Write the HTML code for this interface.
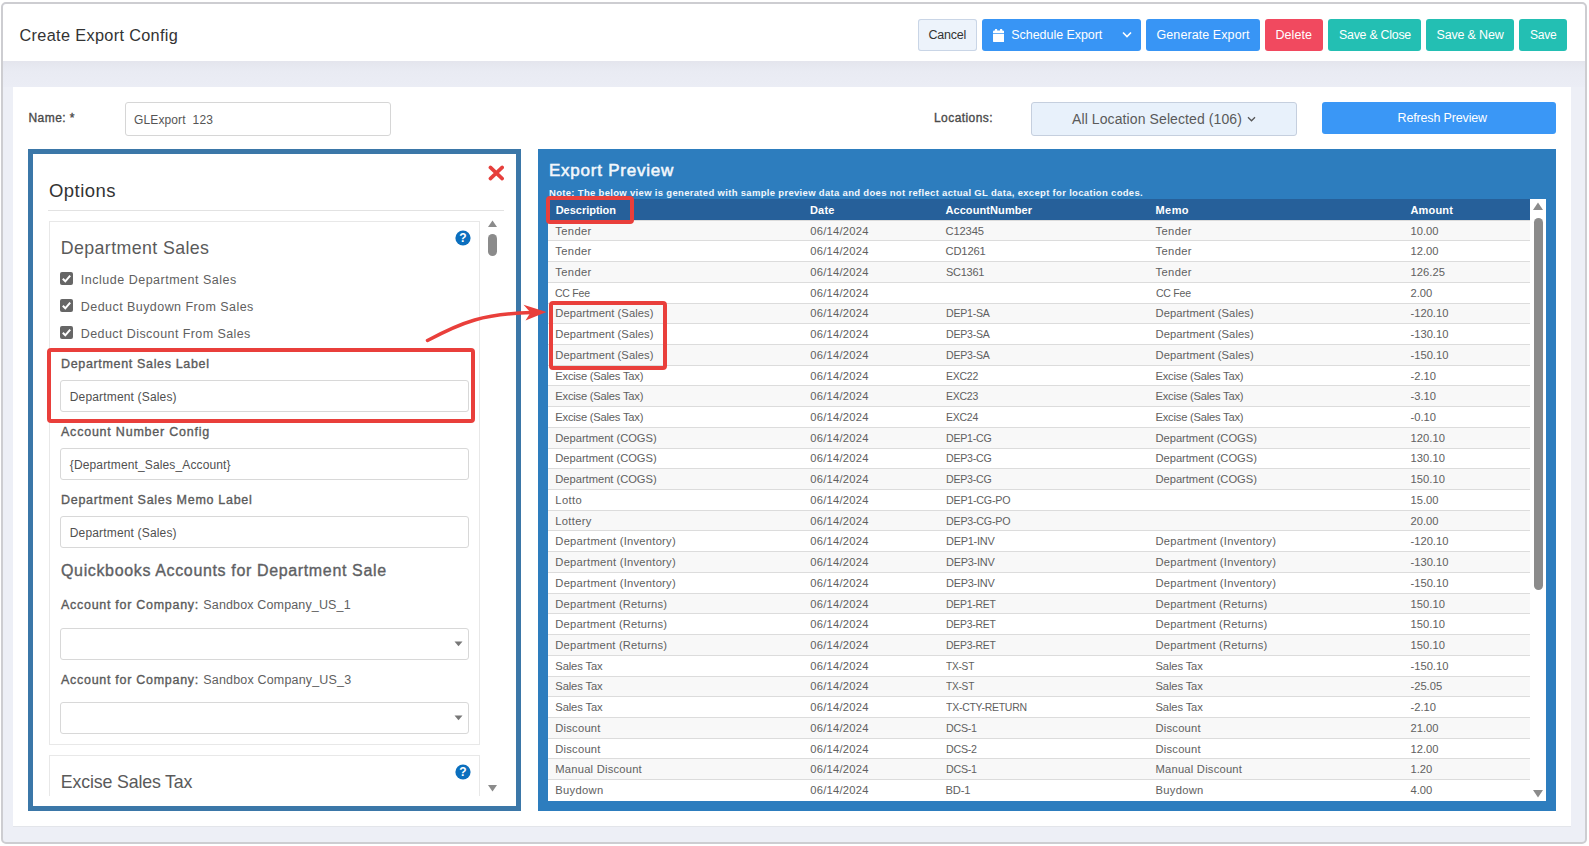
<!DOCTYPE html><html><head><meta charset="utf-8"><title>Create Export Config</title><style>
html,body{margin:0;padding:0;background:#fff;}body{width:1589px;height:846px;overflow:hidden;position:relative;font-family:"Liberation Sans", sans-serif;}
body>div,body>svg,body>span{position:absolute;display:block;}span{white-space:pre;}
</style></head><body>
<div style="left:1px;top:2px;width:1582px;height:838px;border:2px solid #cdcdd1;border-radius:5px;background:#edeff6;"></div>
<div style="left:3px;top:4px;width:1582px;height:57px;background:#fff;border-radius:4px 4px 0 0;"></div>
<div style="left:3px;top:61px;width:1582px;height:26px;background:linear-gradient(#e4e5ed,#e9ebf3 40%,#ebedf5);"></div>
<div style="left:13px;top:87px;width:1558px;height:739.3px;background:#fff;box-shadow:0 1px 0 #e3e5ea;"></div>
<div style="left:918px;top:19.3px;width:59px;height:31.5px;background:#edf3fb;border-radius:3px;box-shadow:inset 0 0 0 1px #c9d5e6;"></div>
<div style="left:982px;top:19.3px;width:159px;height:31.5px;background:#3895f5;border-radius:3px;"></div>
<div style="left:1146px;top:19.3px;width:114px;height:31.5px;background:#3895f5;border-radius:3px;"></div>
<div style="left:1265.3px;top:19.3px;width:57.7px;height:31.5px;background:#f1495f;border-radius:3px;"></div>
<div style="left:1328.3px;top:19.3px;width:92.7px;height:31.5px;background:#23bfb3;border-radius:3px;"></div>
<div style="left:1426.2px;top:19.3px;width:87.8px;height:31.5px;background:#23bfb3;border-radius:3px;"></div>
<div style="left:1519.2px;top:19.3px;width:47.8px;height:31.5px;background:#23bfb3;border-radius:3px;"></div>
<svg style="left:992.8px;top:29.1px" width="11.2" height="13.2" viewBox="0 0 11 13"><path fill="#fff" d="M0 4.7h11v7.1q0 1.2-1.2 1.2H1.2Q0 13 0 11.800zM0 3.9V2.800q0-1.200 1.200-1.200h0.700V0.500q0-.5.500-.5h1.200q.5 0 .5.500V1.600h2.800V0.500q0-.5.500-.5h1.200q.5 0 .5.500V1.600h0.700q1.200 0 1.200 1.200v1.100z"/></svg>
<svg style="left:1122px;top:31px" width="10" height="8" viewBox="0 0 10 8"><path fill="none" stroke="#fff" stroke-width="1.6" d="M1 1.5L5 5.5L9 1.5"/></svg>
<div style="left:125px;top:102px;width:265.5px;height:34px;background:#fff;border:1px solid #d6d6d6;border-radius:3px;box-sizing:border-box;"></div>
<div style="left:1031px;top:102px;width:265.5px;height:34px;background:#e8f1fb;border:1px solid #c5cfde;border-radius:3px;box-sizing:border-box;"></div>
<svg style="left:1246.5px;top:115.5px" width="9" height="7" viewBox="0 0 9 7"><path fill="none" stroke="#555" stroke-width="1.3" d="M1 1.2L4.5 4.8L8 1.2"/></svg>
<div style="left:1321.8px;top:102px;width:234.4px;height:31.6px;background:#3a97f6;border-radius:3px;"></div>
<div style="left:28px;top:149px;width:493px;height:662px;border:5px solid #3b77a8;box-sizing:border-box;background:#fff;"></div>
<svg style="left:488px;top:165px" width="16" height="16" viewBox="0 0 16 16"><path fill="none" stroke="#e63f3c" stroke-width="3.6" stroke-linecap="round" d="M2.4 2.4L14.2 13.6M14.2 2.4L2.4 13.6"/></svg>
<div style="left:48px;top:210px;width:456px;height:1px;background:#e2e2e2;"></div>
<div style="left:49px;top:221px;width:430.5px;height:524px;border:1px solid #e8e8e8;box-sizing:border-box;background:#fff;"></div>
<div style="left:49px;top:755px;width:430.5px;height:41px;border:1px solid #e8e8e8;border-bottom:none;box-sizing:border-box;background:#fff;"></div>
<svg style="left:454.6px;top:229.8px" width="16" height="16" viewBox="0 0 16 16"><circle cx="8" cy="8" r="7.6" fill="#0b6fbe"/><text x="8" y="12.3" text-anchor="middle" font-family='Liberation Sans' font-weight="700" font-size="12" fill="#fff">?</text></svg>
<svg style="left:454.6px;top:763.8px" width="16" height="16" viewBox="0 0 16 16"><circle cx="8" cy="8" r="7.6" fill="#0b6fbe"/><text x="8" y="12.3" text-anchor="middle" font-family='Liberation Sans' font-weight="700" font-size="12" fill="#fff">?</text></svg>
<svg style="left:486px;top:219px" width="13" height="10" viewBox="0 0 13 10"><path fill="#8b8b8b" d="M6.5 1.5L11 8H2z"/></svg>
<div style="left:488px;top:234.4px;width:9px;height:21.3px;background:#8b8b8b;border-radius:4.5px;"></div>
<svg style="left:486px;top:783px" width="13" height="10" viewBox="0 0 13 10"><path fill="#8b8b8b" d="M2 2h9L6.5 8.5z"/></svg>
<svg style="left:60.3px;top:272px" width="13" height="13" viewBox="0 0 13 13"><rect x="0" y="0" width="13" height="13" rx="2" fill="#666"/><path fill="none" stroke="#fff" stroke-width="2" d="M2.8 6.8L5.3 9.3L10.2 3.6"/></svg>
<svg style="left:60.3px;top:299px" width="13" height="13" viewBox="0 0 13 13"><rect x="0" y="0" width="13" height="13" rx="2" fill="#666"/><path fill="none" stroke="#fff" stroke-width="2" d="M2.8 6.8L5.3 9.3L10.2 3.6"/></svg>
<svg style="left:60.3px;top:326px" width="13" height="13" viewBox="0 0 13 13"><rect x="0" y="0" width="13" height="13" rx="2" fill="#666"/><path fill="none" stroke="#fff" stroke-width="2" d="M2.8 6.8L5.3 9.3L10.2 3.6"/></svg>
<div style="left:60.3px;top:380px;width:408.6px;height:32px;background:#fff;border:1px solid #d8d8d8;border-radius:3px;box-sizing:border-box;"></div>
<div style="left:60.3px;top:448px;width:408.6px;height:32px;background:#fff;border:1px solid #d8d8d8;border-radius:3px;box-sizing:border-box;"></div>
<div style="left:60.3px;top:516px;width:408.6px;height:32px;background:#fff;border:1px solid #d8d8d8;border-radius:3px;box-sizing:border-box;"></div>
<div style="left:60.3px;top:628px;width:408.6px;height:32px;background:#fff;border:1px solid #d8d8d8;border-radius:3px;box-sizing:border-box;"></div>
<svg style="left:453.5px;top:640.5px" width="9" height="6" viewBox="0 0 9 6"><path fill="#777" d="M0.5 0.5h8L4.5 5.2z"/></svg>
<div style="left:60.3px;top:702px;width:408.6px;height:32px;background:#fff;border:1px solid #d8d8d8;border-radius:3px;box-sizing:border-box;"></div>
<svg style="left:453.5px;top:714.5px" width="9" height="6" viewBox="0 0 9 6"><path fill="#777" d="M0.5 0.5h8L4.5 5.2z"/></svg>
<div style="left:538px;top:149px;width:1018px;height:662px;background:#2d7dbe;"></div>
<div style="left:548px;top:199px;width:998px;height:601.5px;background:#fff;"></div>
<div style="left:548px;top:199px;width:982px;height:20.68px;background:#26609a;"></div>
<div style="left:548px;top:219.68px;width:982px;height:20.72px;background:#f8f8f8;box-shadow:inset 0 1px 0 #dcdcdc;"></div>
<div style="left:548px;top:240.4px;width:982px;height:20.72px;background:#fff;box-shadow:inset 0 1px 0 #dcdcdc;"></div>
<div style="left:548px;top:261.12px;width:982px;height:20.72px;background:#f8f8f8;box-shadow:inset 0 1px 0 #dcdcdc;"></div>
<div style="left:548px;top:281.84px;width:982px;height:20.72px;background:#fff;box-shadow:inset 0 1px 0 #dcdcdc;"></div>
<div style="left:548px;top:302.56px;width:982px;height:20.72px;background:#f8f8f8;box-shadow:inset 0 1px 0 #dcdcdc;"></div>
<div style="left:548px;top:323.28px;width:982px;height:20.72px;background:#fff;box-shadow:inset 0 1px 0 #dcdcdc;"></div>
<div style="left:548px;top:344px;width:982px;height:20.72px;background:#f8f8f8;box-shadow:inset 0 1px 0 #dcdcdc;"></div>
<div style="left:548px;top:364.72px;width:982px;height:20.72px;background:#fff;box-shadow:inset 0 1px 0 #dcdcdc;"></div>
<div style="left:548px;top:385.44px;width:982px;height:20.72px;background:#f8f8f8;box-shadow:inset 0 1px 0 #dcdcdc;"></div>
<div style="left:548px;top:406.16px;width:982px;height:20.72px;background:#fff;box-shadow:inset 0 1px 0 #dcdcdc;"></div>
<div style="left:548px;top:426.88px;width:982px;height:20.72px;background:#f8f8f8;box-shadow:inset 0 1px 0 #dcdcdc;"></div>
<div style="left:548px;top:447.6px;width:982px;height:20.72px;background:#fff;box-shadow:inset 0 1px 0 #dcdcdc;"></div>
<div style="left:548px;top:468.32px;width:982px;height:20.72px;background:#f8f8f8;box-shadow:inset 0 1px 0 #dcdcdc;"></div>
<div style="left:548px;top:489.04px;width:982px;height:20.72px;background:#fff;box-shadow:inset 0 1px 0 #dcdcdc;"></div>
<div style="left:548px;top:509.76px;width:982px;height:20.72px;background:#f8f8f8;box-shadow:inset 0 1px 0 #dcdcdc;"></div>
<div style="left:548px;top:530.48px;width:982px;height:20.72px;background:#fff;box-shadow:inset 0 1px 0 #dcdcdc;"></div>
<div style="left:548px;top:551.2px;width:982px;height:20.72px;background:#f8f8f8;box-shadow:inset 0 1px 0 #dcdcdc;"></div>
<div style="left:548px;top:571.92px;width:982px;height:20.72px;background:#fff;box-shadow:inset 0 1px 0 #dcdcdc;"></div>
<div style="left:548px;top:592.64px;width:982px;height:20.72px;background:#f8f8f8;box-shadow:inset 0 1px 0 #dcdcdc;"></div>
<div style="left:548px;top:613.36px;width:982px;height:20.72px;background:#fff;box-shadow:inset 0 1px 0 #dcdcdc;"></div>
<div style="left:548px;top:634.08px;width:982px;height:20.72px;background:#f8f8f8;box-shadow:inset 0 1px 0 #dcdcdc;"></div>
<div style="left:548px;top:654.8px;width:982px;height:20.72px;background:#fff;box-shadow:inset 0 1px 0 #dcdcdc;"></div>
<div style="left:548px;top:675.52px;width:982px;height:20.72px;background:#f8f8f8;box-shadow:inset 0 1px 0 #dcdcdc;"></div>
<div style="left:548px;top:696.24px;width:982px;height:20.72px;background:#fff;box-shadow:inset 0 1px 0 #dcdcdc;"></div>
<div style="left:548px;top:716.96px;width:982px;height:20.72px;background:#f8f8f8;box-shadow:inset 0 1px 0 #dcdcdc;"></div>
<div style="left:548px;top:737.68px;width:982px;height:20.72px;background:#fff;box-shadow:inset 0 1px 0 #dcdcdc;"></div>
<div style="left:548px;top:758.4px;width:982px;height:20.72px;background:#f8f8f8;box-shadow:inset 0 1px 0 #dcdcdc;"></div>
<div style="left:548px;top:779.12px;width:982px;height:20.72px;background:#fff;box-shadow:inset 0 1px 0 #dcdcdc;"></div>
<svg style="left:1531px;top:201px" width="14" height="11" viewBox="0 0 14 11"><path fill="#8b8b8b" d="M7 1.5L12 9H2z"/></svg>
<div style="left:1534px;top:218px;width:8.5px;height:372.3px;background:#8b8b8b;border-radius:4.5px;"></div>
<svg style="left:1531px;top:787.5px" width="14" height="11" viewBox="0 0 14 11"><path fill="#8b8b8b" d="M2 2h10L7 9.5z"/></svg>
<div style="left:47px;top:348px;width:428px;height:74.6px;border:4px solid #e93f3b;border-radius:4px;box-sizing:border-box;"></div>
<div style="left:545.7px;top:196.4px;width:88.3px;height:27.2px;border:4px solid #e93f3b;border-radius:4px;box-sizing:border-box;"></div>
<div style="left:549px;top:301px;width:118.4px;height:68.5px;border:4px solid #e93f3b;border-radius:4px;box-sizing:border-box;"></div>
<svg style="left:420px;top:300px" width="135" height="50" viewBox="420 300 135 50"><path fill="none" stroke="#e93f3b" stroke-width="3.5" stroke-linecap="round" d="M427.5 340.5C462 322 484 313.5 532 312.6"/><path fill="#e93f3b" d="M546.5 312L523.5 304.8L530.5 312.6L525.5 320.6z"/></svg>
<span style="left:19.50px;top:25.00px;font-size:16.3px;line-height:21px;color:#333;letter-spacing:0.333px;">Create Export Config</span>
<span style="left:928.50px;top:27.00px;font-size:12.5px;line-height:16px;color:#333;letter-spacing:-0.237px;">Cancel</span>
<span style="left:1011.30px;top:27.00px;font-size:12.5px;line-height:16px;color:#fff;letter-spacing:-0.049px;">Schedule Export</span>
<span style="left:1156.50px;top:27.00px;font-size:12.5px;line-height:16px;color:#fff;letter-spacing:0.085px;">Generate Export</span>
<span style="left:1275.50px;top:27.00px;font-size:12.5px;line-height:16px;color:#fff;letter-spacing:0.060px;">Delete</span>
<span style="left:1338.50px;top:27.00px;font-size:12.5px;line-height:16px;color:#fff;letter-spacing:-0.250px;transform:scaleX(0.9899);transform-origin:0 0;">Save &amp; Close</span>
<span style="left:1436.50px;top:27.00px;font-size:12.5px;line-height:16px;color:#fff;letter-spacing:-0.178px;">Save &amp; New</span>
<span style="left:1529.50px;top:27.00px;font-size:12.5px;line-height:16px;color:#fff;letter-spacing:-0.250px;transform:scaleX(0.9636);transform-origin:0 0;">Save</span>
<span style="left:28.50px;top:110.00px;font-size:12px;line-height:16px;color:#4a4a4a;-webkit-text-stroke:0.35px #4a4a4a;letter-spacing:0.449px;">Name: *</span>
<span style="left:134.00px;top:112.00px;font-size:12px;line-height:16px;color:#555;letter-spacing:0.124px;">GLExport  123</span>
<span style="left:934.00px;top:110.00px;font-size:12px;line-height:16px;color:#4a4a4a;-webkit-text-stroke:0.35px #4a4a4a;letter-spacing:0.430px;">Locations:</span>
<span style="left:1072.00px;top:110.00px;font-size:14px;line-height:18px;color:#5a5a5a;letter-spacing:0.099px;">All Location Selected (106)</span>
<span style="left:1397.50px;top:110.00px;font-size:12.5px;line-height:16px;color:#fff;letter-spacing:-0.147px;">Refresh Preview</span>
<span style="left:49.00px;top:179.00px;font-size:18.5px;line-height:24px;color:#333;letter-spacing:0.462px;">Options</span>
<span style="left:60.80px;top:237.00px;font-size:17.8px;line-height:23px;color:#5a5a5a;letter-spacing:0.386px;">Department Sales</span>
<span style="left:80.80px;top:272.00px;font-size:12.5px;line-height:16px;color:#606060;letter-spacing:0.507px;">Include Department Sales</span>
<span style="left:80.80px;top:299.00px;font-size:12.5px;line-height:16px;color:#606060;letter-spacing:0.444px;">Deduct Buydown From Sales</span>
<span style="left:80.80px;top:326.00px;font-size:12.5px;line-height:16px;color:#606060;letter-spacing:0.419px;">Deduct Discount From Sales</span>
<span style="left:61.00px;top:356.00px;font-size:12.5px;line-height:16px;color:#5a5a5a;-webkit-text-stroke:0.35px #5a5a5a;letter-spacing:0.659px;">Department Sales Label</span>
<span style="left:69.80px;top:389.00px;font-size:12px;line-height:16px;color:#505050;letter-spacing:0.159px;">Department (Sales)</span>
<span style="left:61.00px;top:424.00px;font-size:12.5px;line-height:16px;color:#5a5a5a;-webkit-text-stroke:0.35px #5a5a5a;letter-spacing:0.776px;">Account Number Config</span>
<span style="left:69.80px;top:457.00px;font-size:12px;line-height:16px;color:#505050;letter-spacing:0.133px;">{Department_Sales_Account}</span>
<span style="left:61.00px;top:492.00px;font-size:12.5px;line-height:16px;color:#5a5a5a;-webkit-text-stroke:0.35px #5a5a5a;letter-spacing:0.711px;">Department Sales Memo Label</span>
<span style="left:69.80px;top:525.00px;font-size:12px;line-height:16px;color:#505050;letter-spacing:0.159px;">Department (Sales)</span>
<span style="left:61.00px;top:560.00px;font-size:16px;line-height:21px;color:#5e6063;-webkit-text-stroke:0.35px #5e6063;letter-spacing:0.644px;">Quickbooks Accounts for Department Sale</span>
<span style="left:61.00px;top:597.00px;font-size:12.5px;line-height:16px;color:#5a5a5a;-webkit-text-stroke:0.35px #5a5a5a;letter-spacing:0.716px;">Account for Company:</span>
<span style="left:203.30px;top:597.00px;font-size:12.5px;line-height:16px;color:#606060;letter-spacing:0.148px;">Sandbox Company_US_1</span>
<span style="left:61.00px;top:672.00px;font-size:12.5px;line-height:16px;color:#5a5a5a;-webkit-text-stroke:0.35px #5a5a5a;letter-spacing:0.716px;">Account for Company:</span>
<span style="left:203.30px;top:672.00px;font-size:12.5px;line-height:16px;color:#606060;letter-spacing:0.173px;">Sandbox Company_US_3</span>
<span style="left:60.80px;top:771.00px;font-size:17.8px;line-height:23px;color:#5a5a5a;letter-spacing:-0.162px;">Excise Sales Tax</span>
<span style="left:549.00px;top:160.00px;font-size:17px;line-height:22px;color:#f2f7fc;-webkit-text-stroke:0.55px #f2f7fc;letter-spacing:0.762px;">Export Preview</span>
<span style="left:549.00px;top:187.00px;font-size:9.5px;line-height:12px;color:#f2f7fc;font-weight:700;letter-spacing:0.314px;">Note: The below view is generated with sample preview data and does not reflect actual GL data, except for location codes.</span>
<span style="left:555.70px;top:203.00px;font-size:11px;line-height:14px;color:#fff;font-weight:700;letter-spacing:-0.020px;">Description</span>
<span style="left:810.00px;top:203.00px;font-size:11px;line-height:14px;color:#fff;font-weight:700;letter-spacing:0.164px;">Date</span>
<span style="left:945.40px;top:203.00px;font-size:11px;line-height:14px;color:#fff;font-weight:700;letter-spacing:0.095px;">AccountNumber</span>
<span style="left:1155.50px;top:203.00px;font-size:11px;line-height:14px;color:#fff;font-weight:700;letter-spacing:0.430px;">Memo</span>
<span style="left:1410.50px;top:203.00px;font-size:11px;line-height:14px;color:#fff;font-weight:700;letter-spacing:0.159px;">Amount</span>
<span style="left:555.30px;top:224.00px;font-size:11.2px;line-height:15px;color:#606060;letter-spacing:0.365px;">Tender</span>
<span style="left:810.30px;top:224.00px;font-size:11.2px;line-height:15px;color:#606060;letter-spacing:0.239px;">06/14/2024</span>
<span style="left:945.50px;top:224.00px;font-size:11.2px;line-height:15px;color:#606060;letter-spacing:-0.136px;">C12345</span>
<span style="left:1155.50px;top:224.00px;font-size:11.2px;line-height:15px;color:#606060;letter-spacing:0.365px;">Tender</span>
<span style="left:1410.50px;top:224.00px;font-size:11.2px;line-height:15px;color:#606060;letter-spacing:0.017px;">10.00</span>
<span style="left:555.30px;top:244.00px;font-size:11.2px;line-height:15px;color:#606060;letter-spacing:0.365px;">Tender</span>
<span style="left:810.30px;top:244.00px;font-size:11.2px;line-height:15px;color:#606060;letter-spacing:0.239px;">06/14/2024</span>
<span style="left:945.50px;top:244.00px;font-size:11.2px;line-height:15px;color:#606060;letter-spacing:-0.155px;">CD1261</span>
<span style="left:1155.50px;top:244.00px;font-size:11.2px;line-height:15px;color:#606060;letter-spacing:0.365px;">Tender</span>
<span style="left:1410.50px;top:244.00px;font-size:11.2px;line-height:15px;color:#606060;letter-spacing:0.017px;">12.00</span>
<span style="left:555.30px;top:265.00px;font-size:11.2px;line-height:15px;color:#606060;letter-spacing:0.365px;">Tender</span>
<span style="left:810.30px;top:265.00px;font-size:11.2px;line-height:15px;color:#606060;letter-spacing:0.239px;">06/14/2024</span>
<span style="left:945.50px;top:265.00px;font-size:11.2px;line-height:15px;color:#606060;letter-spacing:-0.250px;transform:scaleX(0.9794);transform-origin:0 0;">SC1361</span>
<span style="left:1155.50px;top:265.00px;font-size:11.2px;line-height:15px;color:#606060;letter-spacing:0.365px;">Tender</span>
<span style="left:1410.50px;top:265.00px;font-size:11.2px;line-height:15px;color:#606060;letter-spacing:0.026px;">126.25</span>
<span style="left:555.30px;top:286.00px;font-size:11.2px;line-height:15px;color:#606060;letter-spacing:-0.250px;transform:scaleX(0.9382);transform-origin:0 0;">CC Fee</span>
<span style="left:810.30px;top:286.00px;font-size:11.2px;line-height:15px;color:#606060;letter-spacing:0.239px;">06/14/2024</span>
<span style="left:1155.50px;top:286.00px;font-size:11.2px;line-height:15px;color:#606060;letter-spacing:-0.250px;transform:scaleX(0.9382);transform-origin:0 0;">CC Fee</span>
<span style="left:1410.50px;top:286.00px;font-size:11.2px;line-height:15px;color:#606060;">2.00</span>
<span style="left:555.30px;top:306.00px;font-size:11.2px;line-height:15px;color:#606060;letter-spacing:0.066px;">Department (Sales)</span>
<span style="left:810.30px;top:306.00px;font-size:11.2px;line-height:15px;color:#606060;letter-spacing:0.239px;">06/14/2024</span>
<span style="left:945.50px;top:306.00px;font-size:11.2px;line-height:15px;color:#606060;letter-spacing:-0.250px;transform:scaleX(0.9450);transform-origin:0 0;">DEP1-SA</span>
<span style="left:1155.50px;top:306.00px;font-size:11.2px;line-height:15px;color:#606060;letter-spacing:0.066px;">Department (Sales)</span>
<span style="left:1410.50px;top:306.00px;font-size:11.2px;line-height:15px;color:#606060;letter-spacing:-0.006px;">-120.10</span>
<span style="left:555.30px;top:327.00px;font-size:11.2px;line-height:15px;color:#606060;letter-spacing:0.066px;">Department (Sales)</span>
<span style="left:810.30px;top:327.00px;font-size:11.2px;line-height:15px;color:#606060;letter-spacing:0.239px;">06/14/2024</span>
<span style="left:945.50px;top:327.00px;font-size:11.2px;line-height:15px;color:#606060;letter-spacing:-0.250px;transform:scaleX(0.9450);transform-origin:0 0;">DEP3-SA</span>
<span style="left:1155.50px;top:327.00px;font-size:11.2px;line-height:15px;color:#606060;letter-spacing:0.066px;">Department (Sales)</span>
<span style="left:1410.50px;top:327.00px;font-size:11.2px;line-height:15px;color:#606060;letter-spacing:-0.006px;">-130.10</span>
<span style="left:555.30px;top:348.00px;font-size:11.2px;line-height:15px;color:#606060;letter-spacing:0.066px;">Department (Sales)</span>
<span style="left:810.30px;top:348.00px;font-size:11.2px;line-height:15px;color:#606060;letter-spacing:0.239px;">06/14/2024</span>
<span style="left:945.50px;top:348.00px;font-size:11.2px;line-height:15px;color:#606060;letter-spacing:-0.250px;transform:scaleX(0.9450);transform-origin:0 0;">DEP3-SA</span>
<span style="left:1155.50px;top:348.00px;font-size:11.2px;line-height:15px;color:#606060;letter-spacing:0.066px;">Department (Sales)</span>
<span style="left:1410.50px;top:348.00px;font-size:11.2px;line-height:15px;color:#606060;letter-spacing:-0.006px;">-150.10</span>
<span style="left:555.30px;top:369.00px;font-size:11.2px;line-height:15px;color:#606060;letter-spacing:-0.219px;">Excise (Sales Tax)</span>
<span style="left:810.30px;top:369.00px;font-size:11.2px;line-height:15px;color:#606060;letter-spacing:0.239px;">06/14/2024</span>
<span style="left:945.50px;top:369.00px;font-size:11.2px;line-height:15px;color:#606060;letter-spacing:-0.250px;transform:scaleX(0.9351);transform-origin:0 0;">EXC22</span>
<span style="left:1155.50px;top:369.00px;font-size:11.2px;line-height:15px;color:#606060;letter-spacing:-0.219px;">Excise (Sales Tax)</span>
<span style="left:1410.50px;top:369.00px;font-size:11.2px;line-height:15px;color:#606060;letter-spacing:-0.033px;">-2.10</span>
<span style="left:555.30px;top:389.00px;font-size:11.2px;line-height:15px;color:#606060;letter-spacing:-0.219px;">Excise (Sales Tax)</span>
<span style="left:810.30px;top:389.00px;font-size:11.2px;line-height:15px;color:#606060;letter-spacing:0.239px;">06/14/2024</span>
<span style="left:945.50px;top:389.00px;font-size:11.2px;line-height:15px;color:#606060;letter-spacing:-0.250px;transform:scaleX(0.9351);transform-origin:0 0;">EXC23</span>
<span style="left:1155.50px;top:389.00px;font-size:11.2px;line-height:15px;color:#606060;letter-spacing:-0.219px;">Excise (Sales Tax)</span>
<span style="left:1410.50px;top:389.00px;font-size:11.2px;line-height:15px;color:#606060;letter-spacing:-0.033px;">-3.10</span>
<span style="left:555.30px;top:410.00px;font-size:11.2px;line-height:15px;color:#606060;letter-spacing:-0.219px;">Excise (Sales Tax)</span>
<span style="left:810.30px;top:410.00px;font-size:11.2px;line-height:15px;color:#606060;letter-spacing:0.239px;">06/14/2024</span>
<span style="left:945.50px;top:410.00px;font-size:11.2px;line-height:15px;color:#606060;letter-spacing:-0.250px;transform:scaleX(0.9351);transform-origin:0 0;">EXC24</span>
<span style="left:1155.50px;top:410.00px;font-size:11.2px;line-height:15px;color:#606060;letter-spacing:-0.219px;">Excise (Sales Tax)</span>
<span style="left:1410.50px;top:410.00px;font-size:11.2px;line-height:15px;color:#606060;letter-spacing:-0.033px;">-0.10</span>
<span style="left:555.30px;top:431.00px;font-size:11.2px;line-height:15px;color:#606060;letter-spacing:-0.035px;">Department (COGS)</span>
<span style="left:810.30px;top:431.00px;font-size:11.2px;line-height:15px;color:#606060;letter-spacing:0.239px;">06/14/2024</span>
<span style="left:945.50px;top:431.00px;font-size:11.2px;line-height:15px;color:#606060;letter-spacing:-0.250px;transform:scaleX(0.9490);transform-origin:0 0;">DEP1-CG</span>
<span style="left:1155.50px;top:431.00px;font-size:11.2px;line-height:15px;color:#606060;letter-spacing:-0.035px;">Department (COGS)</span>
<span style="left:1410.50px;top:431.00px;font-size:11.2px;line-height:15px;color:#606060;letter-spacing:0.026px;">120.10</span>
<span style="left:555.30px;top:451.00px;font-size:11.2px;line-height:15px;color:#606060;letter-spacing:-0.035px;">Department (COGS)</span>
<span style="left:810.30px;top:451.00px;font-size:11.2px;line-height:15px;color:#606060;letter-spacing:0.239px;">06/14/2024</span>
<span style="left:945.50px;top:451.00px;font-size:11.2px;line-height:15px;color:#606060;letter-spacing:-0.250px;transform:scaleX(0.9490);transform-origin:0 0;">DEP3-CG</span>
<span style="left:1155.50px;top:451.00px;font-size:11.2px;line-height:15px;color:#606060;letter-spacing:-0.035px;">Department (COGS)</span>
<span style="left:1410.50px;top:451.00px;font-size:11.2px;line-height:15px;color:#606060;letter-spacing:0.026px;">130.10</span>
<span style="left:555.30px;top:472.00px;font-size:11.2px;line-height:15px;color:#606060;letter-spacing:-0.035px;">Department (COGS)</span>
<span style="left:810.30px;top:472.00px;font-size:11.2px;line-height:15px;color:#606060;letter-spacing:0.239px;">06/14/2024</span>
<span style="left:945.50px;top:472.00px;font-size:11.2px;line-height:15px;color:#606060;letter-spacing:-0.250px;transform:scaleX(0.9490);transform-origin:0 0;">DEP3-CG</span>
<span style="left:1155.50px;top:472.00px;font-size:11.2px;line-height:15px;color:#606060;letter-spacing:-0.035px;">Department (COGS)</span>
<span style="left:1410.50px;top:472.00px;font-size:11.2px;line-height:15px;color:#606060;letter-spacing:0.026px;">150.10</span>
<span style="left:555.30px;top:493.00px;font-size:11.2px;line-height:15px;color:#606060;letter-spacing:0.375px;">Lotto</span>
<span style="left:810.30px;top:493.00px;font-size:11.2px;line-height:15px;color:#606060;letter-spacing:0.239px;">06/14/2024</span>
<span style="left:945.50px;top:493.00px;font-size:11.2px;line-height:15px;color:#606060;letter-spacing:-0.250px;transform:scaleX(0.9574);transform-origin:0 0;">DEP1-CG-PO</span>
<span style="left:1410.50px;top:493.00px;font-size:11.2px;line-height:15px;color:#606060;letter-spacing:0.017px;">15.00</span>
<span style="left:555.30px;top:514.00px;font-size:11.2px;line-height:15px;color:#606060;letter-spacing:0.303px;">Lottery</span>
<span style="left:810.30px;top:514.00px;font-size:11.2px;line-height:15px;color:#606060;letter-spacing:0.239px;">06/14/2024</span>
<span style="left:945.50px;top:514.00px;font-size:11.2px;line-height:15px;color:#606060;letter-spacing:-0.250px;transform:scaleX(0.9574);transform-origin:0 0;">DEP3-CG-PO</span>
<span style="left:1410.50px;top:514.00px;font-size:11.2px;line-height:15px;color:#606060;letter-spacing:0.017px;">20.00</span>
<span style="left:555.30px;top:534.00px;font-size:11.2px;line-height:15px;color:#606060;letter-spacing:0.255px;">Department (Inventory)</span>
<span style="left:810.30px;top:534.00px;font-size:11.2px;line-height:15px;color:#606060;letter-spacing:0.239px;">06/14/2024</span>
<span style="left:945.50px;top:534.00px;font-size:11.2px;line-height:15px;color:#606060;letter-spacing:-0.250px;transform:scaleX(0.9775);transform-origin:0 0;">DEP1-INV</span>
<span style="left:1155.50px;top:534.00px;font-size:11.2px;line-height:15px;color:#606060;letter-spacing:0.255px;">Department (Inventory)</span>
<span style="left:1410.50px;top:534.00px;font-size:11.2px;line-height:15px;color:#606060;letter-spacing:-0.006px;">-120.10</span>
<span style="left:555.30px;top:555.00px;font-size:11.2px;line-height:15px;color:#606060;letter-spacing:0.255px;">Department (Inventory)</span>
<span style="left:810.30px;top:555.00px;font-size:11.2px;line-height:15px;color:#606060;letter-spacing:0.239px;">06/14/2024</span>
<span style="left:945.50px;top:555.00px;font-size:11.2px;line-height:15px;color:#606060;letter-spacing:-0.250px;transform:scaleX(0.9775);transform-origin:0 0;">DEP3-INV</span>
<span style="left:1155.50px;top:555.00px;font-size:11.2px;line-height:15px;color:#606060;letter-spacing:0.255px;">Department (Inventory)</span>
<span style="left:1410.50px;top:555.00px;font-size:11.2px;line-height:15px;color:#606060;letter-spacing:-0.006px;">-130.10</span>
<span style="left:555.30px;top:576.00px;font-size:11.2px;line-height:15px;color:#606060;letter-spacing:0.255px;">Department (Inventory)</span>
<span style="left:810.30px;top:576.00px;font-size:11.2px;line-height:15px;color:#606060;letter-spacing:0.239px;">06/14/2024</span>
<span style="left:945.50px;top:576.00px;font-size:11.2px;line-height:15px;color:#606060;letter-spacing:-0.250px;transform:scaleX(0.9775);transform-origin:0 0;">DEP3-INV</span>
<span style="left:1155.50px;top:576.00px;font-size:11.2px;line-height:15px;color:#606060;letter-spacing:0.255px;">Department (Inventory)</span>
<span style="left:1410.50px;top:576.00px;font-size:11.2px;line-height:15px;color:#606060;letter-spacing:-0.006px;">-150.10</span>
<span style="left:555.30px;top:597.00px;font-size:11.2px;line-height:15px;color:#606060;letter-spacing:0.187px;">Department (Returns)</span>
<span style="left:810.30px;top:597.00px;font-size:11.2px;line-height:15px;color:#606060;letter-spacing:0.239px;">06/14/2024</span>
<span style="left:945.50px;top:597.00px;font-size:11.2px;line-height:15px;color:#606060;letter-spacing:-0.250px;transform:scaleX(0.9299);transform-origin:0 0;">DEP1-RET</span>
<span style="left:1155.50px;top:597.00px;font-size:11.2px;line-height:15px;color:#606060;letter-spacing:0.187px;">Department (Returns)</span>
<span style="left:1410.50px;top:597.00px;font-size:11.2px;line-height:15px;color:#606060;letter-spacing:0.026px;">150.10</span>
<span style="left:555.30px;top:617.00px;font-size:11.2px;line-height:15px;color:#606060;letter-spacing:0.187px;">Department (Returns)</span>
<span style="left:810.30px;top:617.00px;font-size:11.2px;line-height:15px;color:#606060;letter-spacing:0.239px;">06/14/2024</span>
<span style="left:945.50px;top:617.00px;font-size:11.2px;line-height:15px;color:#606060;letter-spacing:-0.250px;transform:scaleX(0.9299);transform-origin:0 0;">DEP3-RET</span>
<span style="left:1155.50px;top:617.00px;font-size:11.2px;line-height:15px;color:#606060;letter-spacing:0.187px;">Department (Returns)</span>
<span style="left:1410.50px;top:617.00px;font-size:11.2px;line-height:15px;color:#606060;letter-spacing:0.026px;">150.10</span>
<span style="left:555.30px;top:638.00px;font-size:11.2px;line-height:15px;color:#606060;letter-spacing:0.187px;">Department (Returns)</span>
<span style="left:810.30px;top:638.00px;font-size:11.2px;line-height:15px;color:#606060;letter-spacing:0.239px;">06/14/2024</span>
<span style="left:945.50px;top:638.00px;font-size:11.2px;line-height:15px;color:#606060;letter-spacing:-0.250px;transform:scaleX(0.9299);transform-origin:0 0;">DEP3-RET</span>
<span style="left:1155.50px;top:638.00px;font-size:11.2px;line-height:15px;color:#606060;letter-spacing:0.187px;">Department (Returns)</span>
<span style="left:1410.50px;top:638.00px;font-size:11.2px;line-height:15px;color:#606060;letter-spacing:0.026px;">150.10</span>
<span style="left:555.30px;top:659.00px;font-size:11.2px;line-height:15px;color:#606060;letter-spacing:-0.126px;">Sales Tax</span>
<span style="left:810.30px;top:659.00px;font-size:11.2px;line-height:15px;color:#606060;letter-spacing:0.239px;">06/14/2024</span>
<span style="left:945.50px;top:659.00px;font-size:11.2px;line-height:15px;color:#606060;letter-spacing:-0.250px;transform:scaleX(0.9041);transform-origin:0 0;">TX-ST</span>
<span style="left:1155.50px;top:659.00px;font-size:11.2px;line-height:15px;color:#606060;letter-spacing:-0.126px;">Sales Tax</span>
<span style="left:1410.50px;top:659.00px;font-size:11.2px;line-height:15px;color:#606060;letter-spacing:-0.006px;">-150.10</span>
<span style="left:555.30px;top:679.00px;font-size:11.2px;line-height:15px;color:#606060;letter-spacing:-0.126px;">Sales Tax</span>
<span style="left:810.30px;top:679.00px;font-size:11.2px;line-height:15px;color:#606060;letter-spacing:0.239px;">06/14/2024</span>
<span style="left:945.50px;top:679.00px;font-size:11.2px;line-height:15px;color:#606060;letter-spacing:-0.250px;transform:scaleX(0.9041);transform-origin:0 0;">TX-ST</span>
<span style="left:1155.50px;top:679.00px;font-size:11.2px;line-height:15px;color:#606060;letter-spacing:-0.126px;">Sales Tax</span>
<span style="left:1410.50px;top:679.00px;font-size:11.2px;line-height:15px;color:#606060;letter-spacing:-0.018px;">-25.05</span>
<span style="left:555.30px;top:700.00px;font-size:11.2px;line-height:15px;color:#606060;letter-spacing:-0.126px;">Sales Tax</span>
<span style="left:810.30px;top:700.00px;font-size:11.2px;line-height:15px;color:#606060;letter-spacing:0.239px;">06/14/2024</span>
<span style="left:945.50px;top:700.00px;font-size:11.2px;line-height:15px;color:#606060;letter-spacing:-0.250px;transform:scaleX(0.9345);transform-origin:0 0;">TX-CTY-RETURN</span>
<span style="left:1155.50px;top:700.00px;font-size:11.2px;line-height:15px;color:#606060;letter-spacing:-0.126px;">Sales Tax</span>
<span style="left:1410.50px;top:700.00px;font-size:11.2px;line-height:15px;color:#606060;letter-spacing:-0.033px;">-2.10</span>
<span style="left:555.30px;top:721.00px;font-size:11.2px;line-height:15px;color:#606060;letter-spacing:0.223px;">Discount</span>
<span style="left:810.30px;top:721.00px;font-size:11.2px;line-height:15px;color:#606060;letter-spacing:0.239px;">06/14/2024</span>
<span style="left:945.50px;top:721.00px;font-size:11.2px;line-height:15px;color:#606060;letter-spacing:-0.250px;transform:scaleX(0.9535);transform-origin:0 0;">DCS-1</span>
<span style="left:1155.50px;top:721.00px;font-size:11.2px;line-height:15px;color:#606060;letter-spacing:0.223px;">Discount</span>
<span style="left:1410.50px;top:721.00px;font-size:11.2px;line-height:15px;color:#606060;letter-spacing:0.017px;">21.00</span>
<span style="left:555.30px;top:742.00px;font-size:11.2px;line-height:15px;color:#606060;letter-spacing:0.223px;">Discount</span>
<span style="left:810.30px;top:742.00px;font-size:11.2px;line-height:15px;color:#606060;letter-spacing:0.239px;">06/14/2024</span>
<span style="left:945.50px;top:742.00px;font-size:11.2px;line-height:15px;color:#606060;letter-spacing:-0.250px;transform:scaleX(0.9535);transform-origin:0 0;">DCS-2</span>
<span style="left:1155.50px;top:742.00px;font-size:11.2px;line-height:15px;color:#606060;letter-spacing:0.223px;">Discount</span>
<span style="left:1410.50px;top:742.00px;font-size:11.2px;line-height:15px;color:#606060;letter-spacing:0.017px;">12.00</span>
<span style="left:555.30px;top:762.00px;font-size:11.2px;line-height:15px;color:#606060;letter-spacing:0.220px;">Manual Discount</span>
<span style="left:810.30px;top:762.00px;font-size:11.2px;line-height:15px;color:#606060;letter-spacing:0.239px;">06/14/2024</span>
<span style="left:945.50px;top:762.00px;font-size:11.2px;line-height:15px;color:#606060;letter-spacing:-0.250px;transform:scaleX(0.9535);transform-origin:0 0;">DCS-1</span>
<span style="left:1155.50px;top:762.00px;font-size:11.2px;line-height:15px;color:#606060;letter-spacing:0.220px;">Manual Discount</span>
<span style="left:1410.50px;top:762.00px;font-size:11.2px;line-height:15px;color:#606060;">1.20</span>
<span style="left:555.30px;top:783.00px;font-size:11.2px;line-height:15px;color:#606060;letter-spacing:0.298px;">Buydown</span>
<span style="left:810.30px;top:783.00px;font-size:11.2px;line-height:15px;color:#606060;letter-spacing:0.239px;">06/14/2024</span>
<span style="left:945.50px;top:783.00px;font-size:11.2px;line-height:15px;color:#606060;letter-spacing:-0.131px;">BD-1</span>
<span style="left:1155.50px;top:783.00px;font-size:11.2px;line-height:15px;color:#606060;letter-spacing:0.298px;">Buydown</span>
<span style="left:1410.50px;top:783.00px;font-size:11.2px;line-height:15px;color:#606060;">4.00</span>
</body></html>
